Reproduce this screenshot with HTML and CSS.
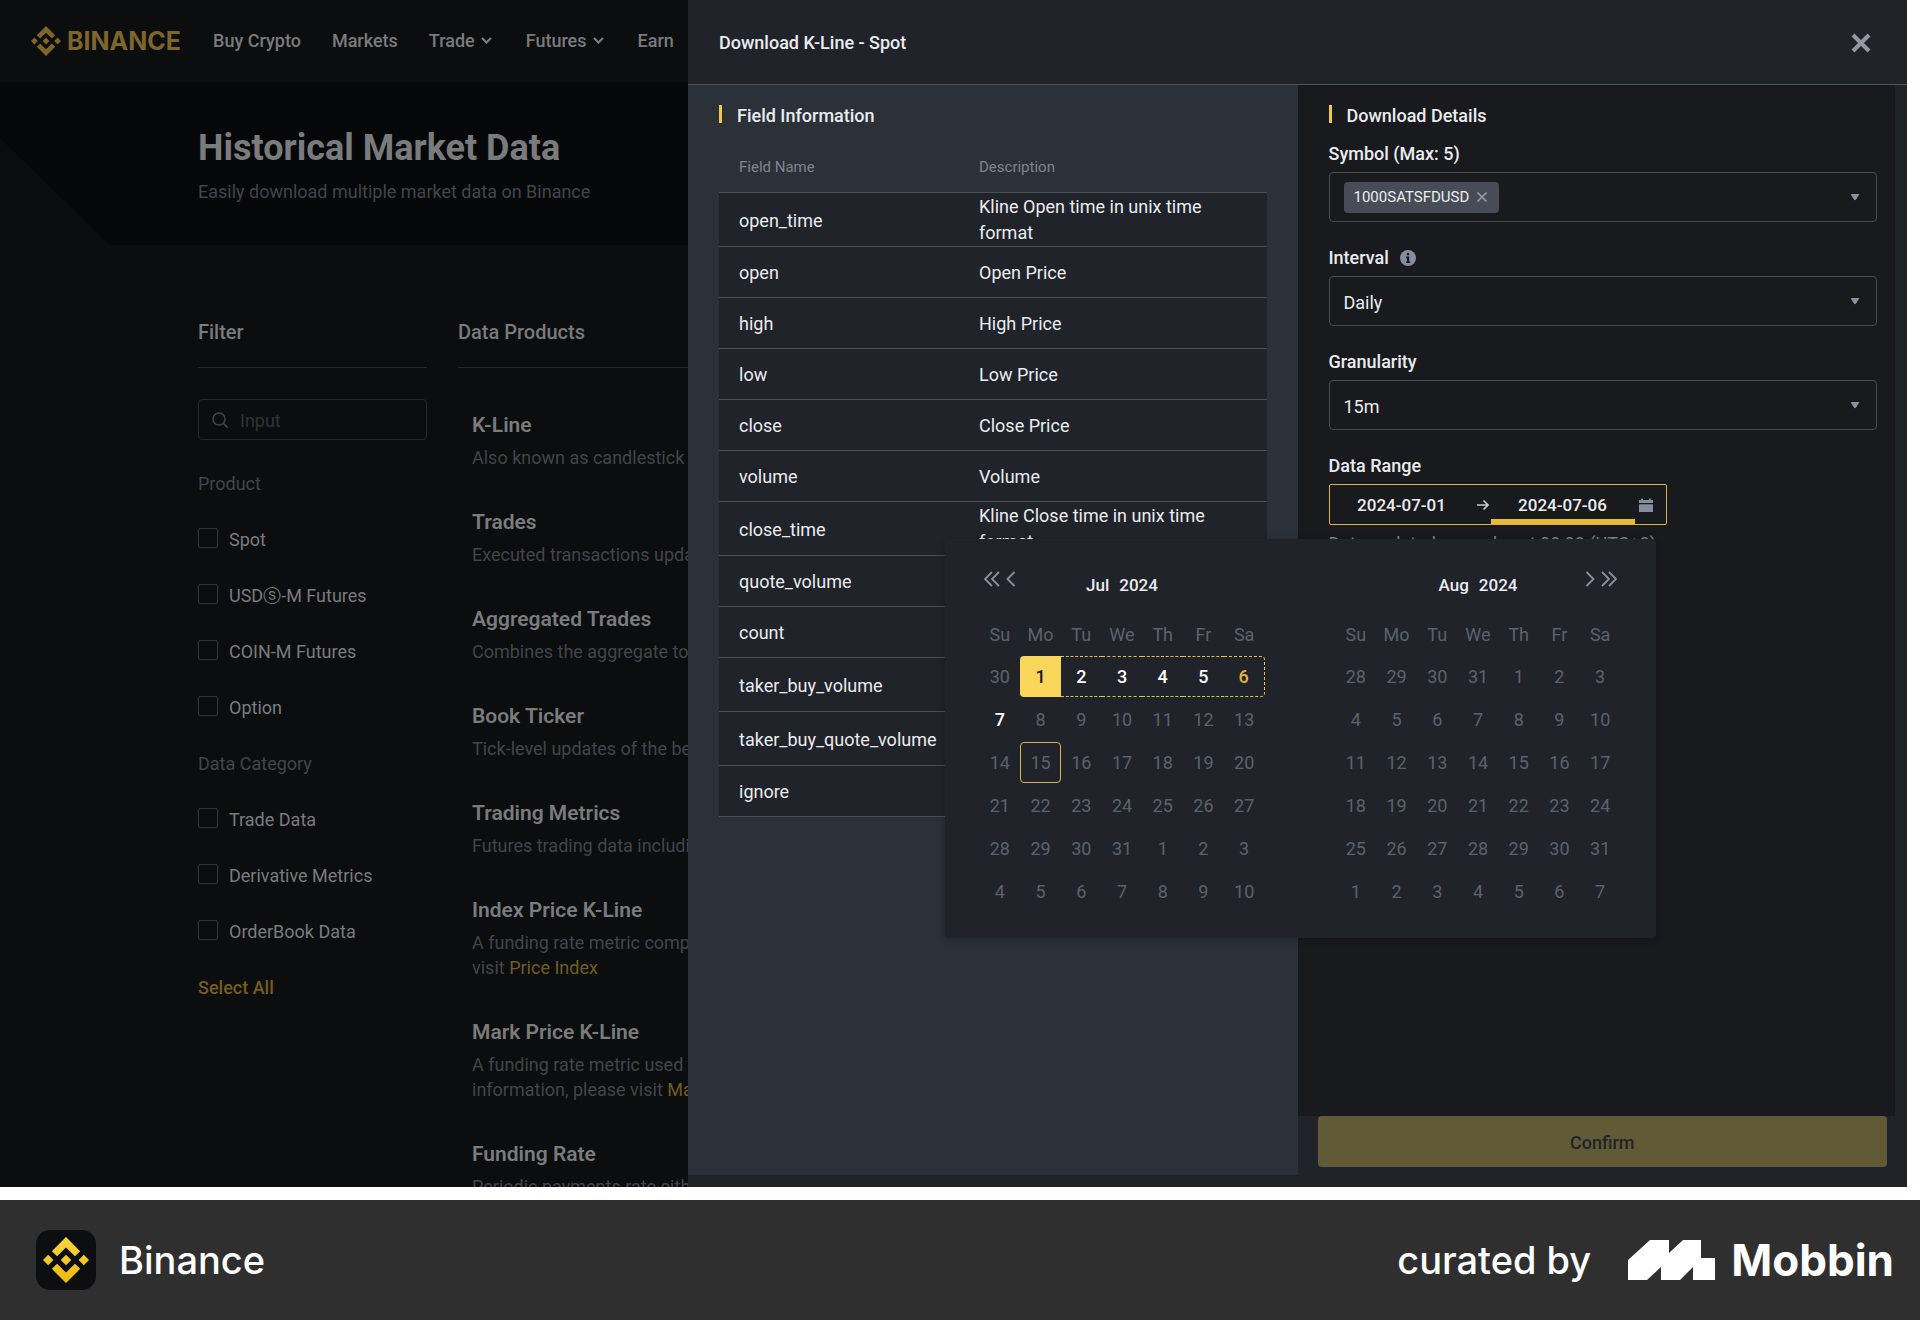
FILE: index.html
```html
<!DOCTYPE html>
<html lang="en">
<head>
<meta charset="utf-8">
<title>Historical Market Data | Binance</title>
<link rel="stylesheet" href="styles.css">
</head>
<body>
<svg class="defs" aria-hidden="true">
  <defs>
    <linearGradient id="gold" x1="0" y1="0" x2="0" y2="1"><stop offset="0" stop-color="#f9d641"/><stop offset="1" stop-color="#f0b90b"/></linearGradient>
    <symbol id="mark" viewBox="0 0 126.61 126.61"><path d="M38.73 53.2 63.32 28.62l24.6 24.6 14.3-14.31L63.32 0 24.43 38.9zM0 63.31 14.3 49l14.31 14.31-14.31 14.3zM38.73 73.41 63.32 98l24.6-24.6 14.31 14.29-38.91 38.91-38.9-38.88zM98 63.31 112.3 49l14.31 14.3-14.31 14.32zM77.83 63.3 63.32 48.78 48.8 63.3l14.52 14.51z"/></symbol>
    <symbol id="chevron" viewBox="0 0 16 16"><path d="M3 5l4.500 4.500L12 5" fill="none" stroke="currentColor" stroke-width="2.200"/></symbol>
    <symbol id="caret" viewBox="0 0 10 8"><path d="M1.6 1h6.8q.9.1.5 1.1L5.9 6.8q-.9.9-1.8 0L1.1 2.1Q.7 1.1 1.6 1z" fill="currentColor"/></symbol>
    <symbol id="cross" viewBox="0 0 20 20"><path d="M2 2l16 16M18 2L2 18" fill="none" stroke="currentColor" stroke-width="4"/></symbol>
  </defs>
</svg>

<div class="app">
  <header class="topbar">
    <a class="brand" href="#"><svg width="30" height="30"><use href="#mark"/></svg><span>BINANCE</span></a>
    <nav class="nav">
      <a href="#">Buy Crypto</a>
      <a href="#">Markets</a>
      <a href="#">Trade<svg width="16" height="16"><use href="#chevron"/></svg></a>
      <a href="#">Futures<svg width="16" height="16"><use href="#chevron"/></svg></a>
      <a href="#">Earn</a>
    </nav>
  </header>

  <section class="hero">
    <h1>Historical Market Data</h1>
    <p>Easily download multiple market data on Binance</p>
  </section>

  <main class="content">
    <aside class="filter">
      <h2>Filter</h2>
      <label class="search">
        <svg width="18" height="18" viewBox="0 0 18 18" fill="none" stroke="currentColor" stroke-width="1.5"><circle cx="8" cy="8" r="6"/><path d="M12.4 12.4l4.4 4.4"/></svg>
        <input type="text" placeholder="Input" aria-label="Search">
      </label>
      <div class="options">
        <p>Product</p>
        <label><input type="checkbox">Spot</label>
        <label><input type="checkbox">USDⓢ-M Futures</label>
        <label><input type="checkbox">COIN-M Futures</label>
        <label><input type="checkbox">Option</label>
        <p>Data Category</p>
        <label><input type="checkbox">Trade Data</label>
        <label><input type="checkbox">Derivative Metrics</label>
        <label><input type="checkbox">OrderBook Data</label>
        <button type="button" class="select-all">Select All</button>
      </div>
    </aside>
    <section class="products">
      <h2>Data Products</h2>
      <div class="product-list">
        <article><h3>K-Line</h3><p>Also known as candlestick chart</p></article>
        <article><h3>Trades</h3><p>Executed transactions updated</p></article>
        <article><h3>Aggregated Trades</h3><p>Combines the aggregate total</p></article>
        <article><h3>Book Ticker</h3><p>Tick-level updates of the best</p></article>
        <article><h3>Trading Metrics</h3><p>Futures trading data including</p></article>
        <article><h3>Index Price K-Line</h3><p>A funding rate metric comprising<br>visit <a href="#">Price Index</a></p></article>
        <article><h3>Mark Price K-Line</h3><p>A funding rate metric used to<br>information, please visit <a href="#">Mark Price</a></p></article>
        <article><h3>Funding Rate</h3><p>Periodic payments rate either</p></article>
      </div>
    </section>
  </main>

  <section class="drawer" role="dialog" aria-labelledby="drawer-title">
    <header class="drawer-head">
      <h2 id="drawer-title">Download K-Line - Spot</h2>
      <button type="button" aria-label="Close"><svg width="20" height="20"><use href="#cross"/></svg></button>
    </header>
    <div class="drawer-body">
      <section class="fields">
        <h3 class="section-title">Field Information</h3>
        <table>
          <thead><tr><th>Field Name</th><th>Description</th></tr></thead>
          <tbody>
            <tr class="tall"><td>open_time</td><td>Kline Open time in unix time format</td></tr>
            <tr><td>open</td><td>Open Price</td></tr>
            <tr><td>high</td><td>High Price</td></tr>
            <tr><td>low</td><td>Low Price</td></tr>
            <tr><td>close</td><td>Close Price</td></tr>
            <tr><td>volume</td><td>Volume</td></tr>
            <tr class="tall"><td>close_time</td><td>Kline Close time in unix time format</td></tr>
            <tr><td>quote_volume</td><td></td></tr>
            <tr><td>count</td><td></td></tr>
            <tr class="tall"><td>taker_buy_volume</td><td></td></tr>
            <tr class="tall"><td>taker_buy_quote_volume</td><td></td></tr>
            <tr><td>ignore</td><td></td></tr>
          </tbody>
        </table>
      </section>

      <form class="details">
        <div class="panel">
          <h3 class="section-title">Download Details</h3>

          <div class="field">
            <label for="symbol">Symbol (Max: 5)</label>
            <div class="box multi">
              <span class="chip">1000SATSFDUSD<button type="button" aria-label="Remove 1000SATSFDUSD"><svg width="12" height="12" viewBox="0 0 12 12"><path d="M1.500 1.500l9 9M10.500 1.500l-9 9" stroke="currentColor" stroke-width="1.5"/></svg></button></span>
              <input id="symbol" type="text">
              <svg class="caret" width="10" height="8"><use href="#caret"/></svg>
            </div>
          </div>

          <div class="field">
            <label for="interval">Interval
              <svg width="16" height="16" viewBox="0 0 16 16"><circle cx="8" cy="8" r="8" fill="#848e9c"/><path d="M6.9 3h2.2v2.2H6.9zM6 6.6h3.2v4.8h1V13H6v-1.600h1V8.200H6z" fill="#181a1e"/></svg>
            </label>
            <div class="box">
              <select id="interval"><option>Daily</option><option>Monthly</option></select>
              <svg class="caret" width="10" height="8"><use href="#caret"/></svg>
            </div>
          </div>

          <div class="field">
            <label for="granularity">Granularity</label>
            <div class="box">
              <select id="granularity"><option>15m</option><option>1h</option></select>
              <svg class="caret" width="10" height="8"><use href="#caret"/></svg>
            </div>
          </div>

          <div class="field">
            <label for="from">Data Range</label>
            <div class="range">
              <input id="from" type="text" value="2024-07-01">
              <svg class="arrow" width="17" height="14" viewBox="0 0 17 14" fill="none" stroke="#c5c8cc" stroke-width="1.700"><path d="M3 7h11M9.500 2.500L14 7l-4.500 4.500"/></svg>
              <input class="active" type="text" value="2024-07-06" aria-label="End date">
              <svg class="cal-icon" width="16" height="14" viewBox="0 0 16 14" fill="#848e9c"><path d="M1 2h2.200V.5h1.800V2h6V.5h1.800V2H15v3H1zM1 6.300h14V14H1z"/></svg>

              <div class="calendar">
                <section class="month">
                  <header>
                    <div class="pager">
                      <button type="button" aria-label="Previous year"><svg width="16" height="16" viewBox="0 0 16 16"><path d="M8 1L1 8l7 7M15 1L8 8l7 7"/></svg></button>
                      <button type="button" aria-label="Previous month"><svg width="10" height="16" viewBox="0 0 10 16"><path d="M8.500 1l-7 7 7 7"/></svg></button>
                    </div>
                    <h4><span>Jul</span><span>2024</span></h4>
                  </header>
                  <div class="week"><span>Su</span><span>Mo</span><span>Tu</span><span>We</span><span>Th</span><span>Fr</span><span>Sa</span></div>
                  <div class="days">
                    <button type="button">30</button><button type="button" class="start">1</button><button type="button" class="in">2</button><button type="button" class="in">3</button><button type="button" class="in">4</button><button type="button" class="in">5</button><button type="button" class="in end">6</button>
                    <button type="button" class="open">7</button><button type="button">8</button><button type="button">9</button><button type="button">10</button><button type="button">11</button><button type="button">12</button><button type="button">13</button>
                    <button type="button">14</button><button type="button" class="today">15</button><button type="button">16</button><button type="button">17</button><button type="button">18</button><button type="button">19</button><button type="button">20</button>
                    <button type="button">21</button><button type="button">22</button><button type="button">23</button><button type="button">24</button><button type="button">25</button><button type="button">26</button><button type="button">27</button>
                    <button type="button">28</button><button type="button">29</button><button type="button">30</button><button type="button">31</button><button type="button">1</button><button type="button">2</button><button type="button">3</button>
                    <button type="button">4</button><button type="button">5</button><button type="button">6</button><button type="button">7</button><button type="button">8</button><button type="button">9</button><button type="button">10</button>
                  </div>
                </section>
                <section class="month">
                  <header>
                    <h4><span>Aug</span><span>2024</span></h4>
                    <div class="pager next">
                      <button type="button" aria-label="Next month"><svg width="10" height="16" viewBox="0 0 10 16"><path d="M1.500 1l7 7-7 7"/></svg></button>
                      <button type="button" aria-label="Next year"><svg width="16" height="16" viewBox="0 0 16 16"><path d="M1 1l7 7-7 7M8 1l7 7-7 7"/></svg></button>
                    </div>
                  </header>
                  <div class="week"><span>Su</span><span>Mo</span><span>Tu</span><span>We</span><span>Th</span><span>Fr</span><span>Sa</span></div>
                  <div class="days">
                    <button type="button">28</button><button type="button">29</button><button type="button">30</button><button type="button">31</button><button type="button">1</button><button type="button">2</button><button type="button">3</button>
                    <button type="button">4</button><button type="button">5</button><button type="button">6</button><button type="button">7</button><button type="button">8</button><button type="button">9</button><button type="button">10</button>
                    <button type="button">11</button><button type="button">12</button><button type="button">13</button><button type="button">14</button><button type="button">15</button><button type="button">16</button><button type="button">17</button>
                    <button type="button">18</button><button type="button">19</button><button type="button">20</button><button type="button">21</button><button type="button">22</button><button type="button">23</button><button type="button">24</button>
                    <button type="button">25</button><button type="button">26</button><button type="button">27</button><button type="button">28</button><button type="button">29</button><button type="button">30</button><button type="button">31</button>
                    <button type="button">1</button><button type="button">2</button><button type="button">3</button><button type="button">4</button><button type="button">5</button><button type="button">6</button><button type="button">7</button>
                  </div>
                </section>
              </div>
            </div>
            <p class="hint">Data updated every day at 08:00 (UTC+0)</p>
          </div>
        </div>
        <button type="button" class="confirm">Confirm</button>
      </form>
    </div>
  </section>
</div>

<footer class="credit">
  <div class="credit-app">
    <span class="app-icon"><svg width="46" height="46" fill="url(#gold)"><use href="#mark"/></svg></span>
    <span>Binance</span>
  </div>
  <div class="credit-by">
    <span>curated by</span>
    <svg width="87" height="40" viewBox="0 0 87 40" fill="#fff"><path d="M0 40V20L22 0h19v13L55 0h18v18h14v22H65V27L52 40H33V27L19 40z"/></svg>
    <strong>Mobbin</strong>
  </div>
</footer>
</body>
</html>
```
FILE: styles.css
```css
* { box-sizing: border-box; }

body {
  margin: 0;
  background: #fff;
  color: #eaecef;
  font-family: Roboto, "Open Sans", sans-serif;
  font-size: 18px;
  line-height: 26px;
}

h1, h2, h3, h4, p { margin: 0; font-size: inherit; font-weight: 500; }
p { font-weight: 400; }
a { color: inherit; text-decoration: none; }
button, input, select { font: inherit; color: inherit; }
button { padding: 0; border: 0; background: none; cursor: pointer; }
svg { display: block; flex: none; }
.defs { position: absolute; width: 0; height: 0; }

/* App frame */
.app {
  position: relative;
  height: calc(100vh - 133px);
  min-height: 1000px;
  margin: 0 13px 13px 0;
  overflow: hidden;
  background: #0b0d0f;
  color: #7a7b7d;
}

.topbar { display: flex; align-items: center; gap: 32px; height: 82px; padding: 0 31px; }
.brand { display: flex; align-items: center; gap: 6px; color: #7e662a; fill: #7e662a; font: 700 25px Inter, sans-serif; }
.nav { display: flex; gap: 31px; font-weight: 500; }
.nav a { display: flex; align-items: center; gap: 4px; }

.hero { position: relative; height: 163px; padding: 44px 198px 0; background: #060709; }
.hero::before {
  content: "";
  position: absolute;
  left: 0;
  bottom: 0;
  width: 110px;
  height: 107px;
  background: #0b0c0e;
  clip-path: polygon(0 0, 100% 100%, 0 100%);
}
.hero h1 { font-size: 36px; line-height: 44px; font-weight: 700; }
.hero p { margin-top: 9px; color: #434549; }

.content { display: flex; gap: 31px; padding: 75px 198px 0; }
.content h2 { padding-bottom: 23px; border-bottom: 1px solid #25272a; font-size: 20px; line-height: 24px; }
.filter { width: 229px; flex: none; }
.products { flex: 1; }

.search {
  display: flex;
  align-items: center;
  gap: 11px;
  height: 41px;
  margin-top: 31px;
  padding: 0 12px;
  border: 1px solid #25272a;
  border-radius: 4px;
  color: #414347;
}
.search input { width: 100%; padding: 2px 0 0; border: 0; outline: 0; background: none; }
.search input::placeholder { color: #303235; opacity: 1; }

.options { display: flex; flex-direction: column; gap: 30px; margin-top: 31px; }
.options p { color: #434549; }
.options label { display: flex; align-items: flex-start; gap: 11px; }
.options input { appearance: none; width: 20px; height: 20px; margin: 1px 0 0; border: 1px solid #323437; border-radius: 2px; }
.select-all { align-self: flex-start; color: #765d1c; font-weight: 500; }

.product-list { display: flex; flex-direction: column; gap: 38px; padding: 43px 0 0 14px; }
.product-list h3 { font-size: 21px; line-height: 28px; font-weight: 600; }
.product-list p { margin-top: 6px; line-height: 25px; color: #434549; white-space: nowrap; }
.product-list a { color: #6f5f20; }

/* Download drawer */
.drawer {
  position: absolute;
  inset: 0 0 0 688px;
  display: flex;
  flex-direction: column;
  background: #20232a;
  color: #eaecef;
}
.drawer-head {
  display: flex;
  align-items: center;
  justify-content: space-between;
  height: 85px;
  padding: 1px 36px 0 31px;
  border-bottom: 1px solid #50545a;
}
.drawer-head button { color: #9297a0; }
.drawer-body { flex: 1; display: grid; grid-template-columns: 1fr 1fr; }

.section-title { display: flex; align-items: flex-start; gap: 15px; }
.section-title::before { content: ""; width: 3px; height: 18px; margin-top: 2px; background: #efc94c; }

.fields { margin-bottom: 12px; padding: 18px 31px 0; background: #2b3139; }
.fields table { width: 100%; margin-top: 13px; border-collapse: collapse; table-layout: fixed; }
.fields th { width: 240px; height: 50px; padding: 0 20px; text-align: left; font-size: 15px; font-weight: 400; color: #7e858f; }
.fields th + th { width: auto; }
.fields td { height: 51px; padding: 3px 20px 0; border-top: 1px solid #4b4f55; border-bottom: 1px solid #4b4f55; background: #20232a; }
.fields .tall td { height: 54px; padding-top: 1px; }
.fields .tall td:first-child { padding-top: 4px; }

.details { display: flex; flex-direction: column; }
.panel { flex: 1; margin-right: 12px; padding: 18px 18px 0 31px; background: #181a1e; }
.panel .section-title { margin-bottom: 12px; }
.field { margin-bottom: 23px; }
.field > label { display: flex; align-items: center; gap: 11px; margin-bottom: 5px; font-weight: 500; }

.box {
  display: flex;
  align-items: center;
  height: 50px;
  padding: 0 16px 0 14px;
  border: 1px solid #474b50;
  border-radius: 4px;
}
.box select, .box input { flex: 1; min-width: 0; height: 48px; padding: 3px 0 0; border: 0; outline: 0; appearance: none; background: transparent; }
.caret { color: #8a919d; }
.chip {
  display: flex;
  align-items: center;
  gap: 7px;
  height: 31px;
  padding: 0 11px 0 10px;
  border-radius: 4px;
  background: #474c56;
  font-size: 15px;
}
.chip button { color: #9aa0aa; }

.range {
  position: relative;
  display: flex;
  align-items: center;
  width: 338px;
  height: 41px;
  border: 1px solid #dcb443;
  border-radius: 2px;
}
.range input {
  width: 144px;
  height: 39px;
  padding: 1px 0 0;
  border: 0;
  outline: 0;
  background: none;
  text-align: center;
  font-size: 17px;
  font-weight: 500;
}
.range .active { box-shadow: inset 0 -5px #eab93a; }
.cal-icon { margin-left: 3px; }
.hint { margin-top: 6px; color: #7e858f; }

.confirm { height: 51px; margin: 0 20px 20px; padding-top: 2px; border-radius: 4px; background: #615a36; color: #20232a; font-weight: 500; }

/* Range calendar */
.calendar {
  position: absolute;
  top: 54px;
  right: 10px;
  z-index: 2;
  display: flex;
  gap: 71px;
  padding: 32px 35px 26px;
  border-radius: 4px;
  background: #20232a;
  box-shadow: 0 2px 8px rgba(0, 0, 0, .25);
}
.month { width: 285px; }
.month header { display: grid; grid-template-columns: 1fr auto 1fr; height: 27px; margin-bottom: 24px; }
.month h4 { grid-column: 2; display: flex; gap: 10px; margin-top: 1px; font-size: 17px; }
.pager { grid-column: 1; display: flex; gap: 6px; height: 16px; padding: 0 4px; }
.pager.next { grid-column: 3; justify-content: flex-end; }
.pager path { fill: none; stroke: #8b919b; stroke-width: 1.8; }
.week, .days { display: grid; grid-template-columns: repeat(7, 1fr); text-align: center; color: #5c626b; }
.week { margin-bottom: 8px; }
.days { row-gap: 2px; }
.days button { height: 41px; }
.days .start { background: #f8d65a; border-radius: 4px 0 0 4px; color: #181a1e; font-weight: 500; }
.days .in { border: 1px dashed #e0c250; border-width: 1px 0; color: #fff; font-weight: 500; }
.days .end { border-right-width: 1px; border-radius: 0 4px 4px 0; color: #e2b43c; }
.days .open { color: #fff; font-weight: 500; }
.days .today { border: 1px solid #d9b145; border-radius: 4px; }

/* Credit strip */
.credit {
  display: flex;
  align-items: center;
  justify-content: space-between;
  height: 120px;
  padding: 0 26px 0 36px;
  background: #2f2f2f;
  color: #fff;
  font: 500 38px Inter, sans-serif;
}
.credit-app { display: flex; align-items: center; gap: 23px; }
.app-icon { display: grid; place-items: center; width: 60px; height: 60px; border-radius: 14px; background: #0c0e10; }
.credit-by { display: flex; align-items: center; }
.credit-by svg { margin: 0 16px 0 37px; }
.credit-by strong { font-size: 44px; font-weight: 700; }
```
